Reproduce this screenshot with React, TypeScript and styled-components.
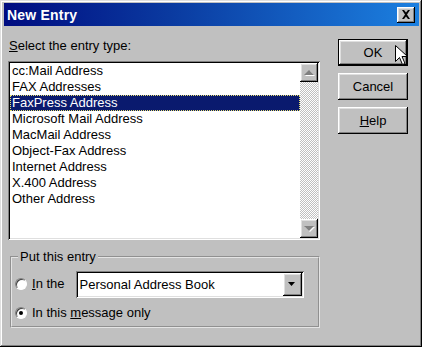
import React from 'react';
import styled, {createGlobalStyle, css} from 'styled-components';

const GlobalStyle = createGlobalStyle`
  html, body {
    margin: 0;
    padding: 0;
    background: #c0c0c0;
  }
  body {
    font-family: "Liberation Sans", Arial, sans-serif;
    font-size: 13px;
    color: #000;
  }
`;

const entries = [
    'cc:Mail Address',
    'FAX Addresses',
    'FaxPress Address',
    'Microsoft Mail Address',
    'MacMail Address',
    'Object-Fax Address',
    'Internet Address',
    'X.400 Address',
    'Other Address',
];

const raised = css`
  background: #c0c0c0;
  box-shadow: inset -1px -1px #000, inset 1px 1px #fff, inset -2px -2px #808080, inset 2px 2px #dfdfdf;
`;

const sunken = css`
  background: #fff;
  box-shadow: inset 1px 1px #808080, inset -1px -1px #fff, inset 2px 2px #000, inset -2px -2px #dfdfdf;
`;

const App: React.FC = () => {
    return (
        <>
            <GlobalStyle/>
            <Window>
                <TitleBar>
                    <Title>New Entry</Title>
                    <CloseButton>
                        <svg width="10" height="9" viewBox="0 0 10 9">
                            <path d="M1 0h2l2 2.5L7 0h2L6 4.5 9 9H7L5 6.5 3 9H1l3-4.5z" fill="#000"/>
                        </svg>
                    </CloseButton>
                </TitleBar>
                <Body>
                    <LeftCol>
                        <Label><u>S</u>elect the entry type:</Label>
                        <ListBox>
                            <Items>
                                {entries.map((e, i) => (
                                    <Item key={e} selected={i === 2}>{e}</Item>
                                ))}
                            </Items>
                            <ScrollBar>
                                <ScrollBtn>
                                    <Arrow up/>
                                </ScrollBtn>
                                <Track/>
                                <ScrollBtn>
                                    <Arrow/>
                                </ScrollBtn>
                            </ScrollBar>
                        </ListBox>
                        <Group>
                            <Legend>Put this entry</Legend>
                            <OptionRow>
                                <Radio/>
                                <OptionText><u>I</u>n the</OptionText>
                                <Combo>
                                    <ComboText>Personal Address Book</ComboText>
                                    <ComboBtn>
                                        <svg width="8" height="4" viewBox="0 0 8 4">
                                            <path d="M0 0h7L3.5 4z" fill="#000"/>
                                        </svg>
                                    </ComboBtn>
                                </Combo>
                            </OptionRow>
                            <OptionRow second>
                                <Radio checked/>
                                <OptionText>In this <u>m</u>essage only</OptionText>
                            </OptionRow>
                        </Group>
                    </LeftCol>
                    <RightCol>
                        <Button isDefault>
                            OK
                            <Cursor width="13" height="21" viewBox="0 0 13 21">
                                <path d="M0.5 0.5v16l4-4 3 7 2.5-1-3-7h5.5z" fill="#fff" stroke="#000"/>
                            </Cursor>
                        </Button>
                        <Button>Cancel</Button>
                        <Button><u>H</u>elp</Button>
                    </RightCol>
                </Body>
            </Window>
        </>
    );
};
export default App;

const Window = styled.div`
  box-sizing: border-box;
  width: 422px;
  height: 347px;
  background: #c0c0c0;
  padding: 3px 3px 0 4px;
  box-shadow: inset -1px -1px #000, inset 1px 1px #dfdfdf, inset -2px -2px #808080, inset 2px 2px #fff;
  display: flex;
  flex-direction: column;
`;

const TitleBar = styled.div`
  height: 23px;
  background: linear-gradient(to right, #000c80 0%, #0a3aa0 40%, #1c80e0 100%);
  display: flex;
  align-items: center;
  justify-content: space-between;
  padding: 0 4px 0 3px;
`;

const Title = styled.span`
  color: #fff;
  font-weight: bold;
  font-size: 14px;
  letter-spacing: 0.2px;
`;

const CloseButton = styled.div`
  ${raised};
  width: 18px;
  height: 16px;
  display: flex;
  align-items: center;
  justify-content: center;
`;

const Body = styled.div`
  display: flex;
  flex: 1;
`;

const LeftCol = styled.div`
  width: 312px;
  margin-left: 4px;
  padding-top: 12px;
  display: flex;
  flex-direction: column;
`;

const Label = styled.div`
  height: 16px;
  line-height: 16px;
  margin-left: 1px;
  margin-bottom: 7px;
`;

const ListBox = styled.div`
  ${sunken};
  box-sizing: border-box;
  height: 179px;
  padding: 2px;
  display: flex;
`;

const Items = styled.div`
  flex: 1;
`;

const Item = styled.div<{selected?: boolean}>`
  box-sizing: border-box;
  height: 16px;
  line-height: 14px;
  padding-left: 1px;
  border: 1px dotted transparent;
  white-space: nowrap;
  ${p => p.selected && css`
    background: #0a1a6e;
    color: #fff;
    border-color: #e8e070;
  `}
`;

const ScrollBar = styled.div`
  width: 18px;
  display: flex;
  flex-direction: column;
`;

const ScrollBtn = styled.div`
  ${raised};
  height: 19px;
  display: flex;
  align-items: center;
  justify-content: center;
`;

const Track = styled.div`
  flex: 1;
  background-color: #fff;
  background-image: repeating-conic-gradient(#c0c0c0 0 25%, #fff 0 50%);
  background-size: 2px 2px;
`;

const Arrow = styled.div<{up?: boolean}>`
  width: 0;
  height: 0;
  border-left: 5px solid transparent;
  border-right: 5px solid transparent;
  filter: drop-shadow(1px 1px 0 #fff);
  ${p => p.up
    ? css`border-bottom: 5px solid #808080;`
    : css`border-top: 5px solid #808080;`}
`;

const Group = styled.fieldset`
  box-sizing: border-box;
  margin: 9px 0 0 2px;
  width: 310px;
  height: 79px;
  padding: 5px 6px 0 3px;
  border: 2px groove #e4e4e4;
  min-width: 0;
`;

const Legend = styled.legend`
  padding: 0 2px;
  margin-left: 3px;
  line-height: 16px;
`;

const OptionRow = styled.div<{second?: boolean}>`
  display: flex;
  align-items: center;
  height: ${p => p.second ? '22px' : '28px'};
  margin-top: ${p => p.second ? '4px' : '0'};
`;

const Radio = styled.span<{checked?: boolean}>`
  position: relative;
  box-sizing: border-box;
  width: 12px;
  height: 12px;
  border-radius: 50%;
  background: #fff;
  border: 1px solid;
  border-color: #808080 #fff #fff #808080;
  box-shadow: inset 1px 1px #404040;
  margin-right: 5px;
  flex-shrink: 0;
  ${p => p.checked && css`
    &::after {
      content: '';
      position: absolute;
      left: 3px;
      top: 3px;
      width: 4px;
      height: 4px;
      border-radius: 50%;
      background: #000;
    }
  `}
`;

const OptionText = styled.span`
  line-height: 16px;
  white-space: nowrap;
`;

const Combo = styled.div`
  ${sunken};
  box-sizing: border-box;
  margin-left: 11px;
  width: 228px;
  height: 27px;
  padding: 2px;
  display: flex;
  align-items: stretch;
`;

const ComboText = styled.div`
  flex: 1;
  padding-left: 2px;
  display: flex;
  align-items: center;
`;

const ComboBtn = styled.div`
  ${raised};
  width: 19px;
  display: flex;
  align-items: center;
  justify-content: center;
`;

const RightCol = styled.div`
  margin-left: 18px;
  padding-top: 13px;
  display: flex;
  flex-direction: column;
  gap: 7px;
`;

const Button = styled.div<{isDefault?: boolean}>`
  position: relative;
  box-sizing: border-box;
  width: 70px;
  height: 27px;
  display: flex;
  align-items: center;
  justify-content: center;
  background: #c0c0c0;
  box-shadow: inset -1px -1px #000, inset 1px 1px #fff, inset -2px -2px #808080, inset 2px 2px #dfdfdf;
  ${p => p.isDefault && css`
    border: 1px solid #000;
  `}
`;

const Cursor = styled.svg`
  position: absolute;
  left: 56px;
  top: 5px;
`;
